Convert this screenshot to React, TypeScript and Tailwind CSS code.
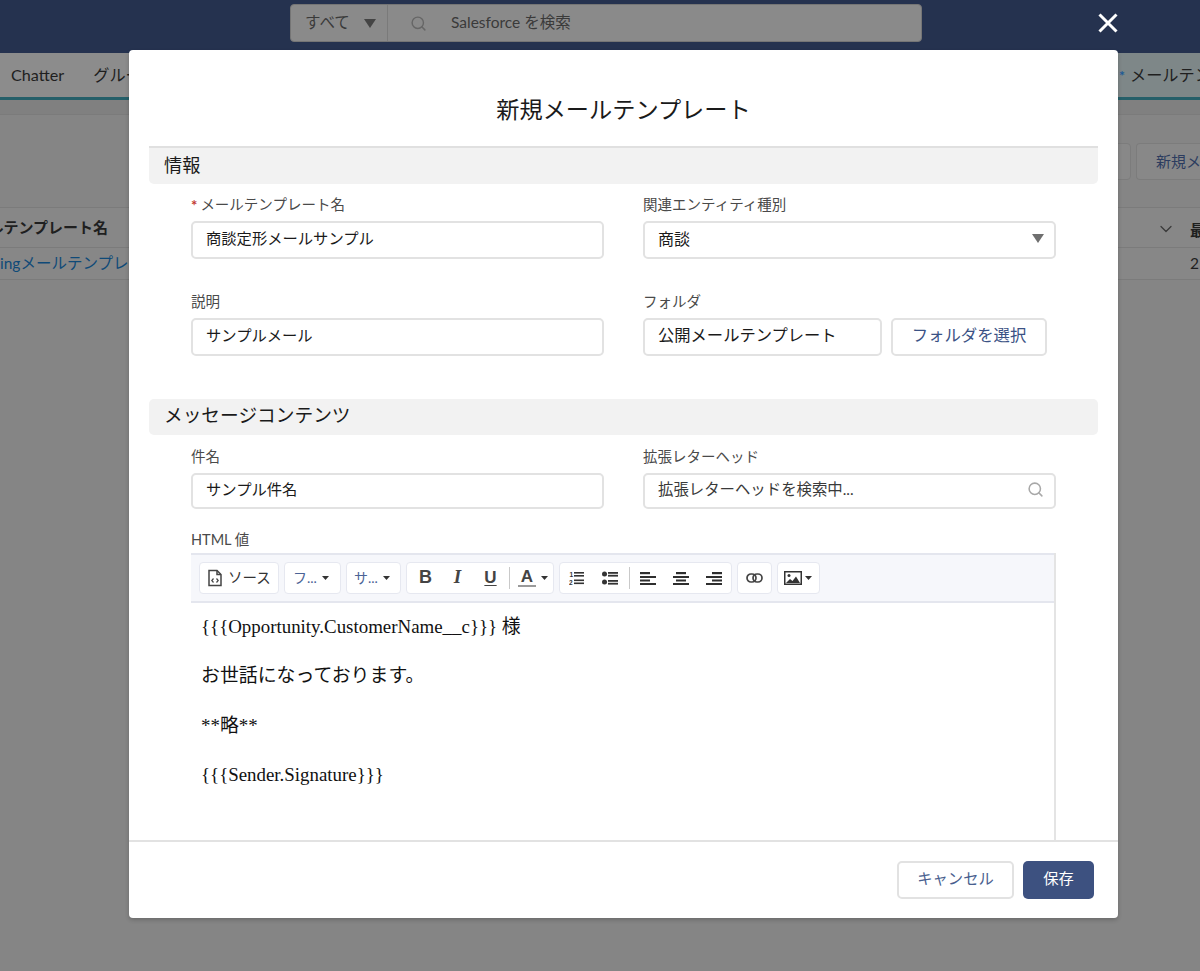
import React from "react";
import { Search, ChevronDown } from "lucide-react";

const Tri = ({ w = 12, h = 9, color = "#4a4a4a" }: { w?: number; h?: number; color?: string }) => (
  <svg width={w} height={h} viewBox="0 0 12 9" className="shrink-0"><path d="M0 0h12L6 9z" fill={color} /></svg>
);

const Field = ({ label, required, children }: { label: string; required?: boolean; children: React.ReactNode }) => (
  <div className="min-w-0">
    <div className="h-[20px] mb-[7px] pt-[2px] text-[14.5px] leading-[20px] text-[#4a4a4a] flex items-center">
      {required && <span className="text-[#c23934] mr-[3px] text-[15px] font-bold">*</span>}
      {label}
    </div>
    {children}
  </div>
);

const boxCls = "border-2 border-[#e2e2e2] rounded-[5px] bg-white flex items-center px-[13px] pb-[3px] text-[#1a1a1a]";

const Group = ({ className, children }: { className: string; children: React.ReactNode }) => (
  <div className={"h-[32px] bg-white border border-[#e6e8f0] rounded-[4px] flex items-center " + className}>{children}</div>
);

const Sep = () => <div className="w-px h-[22px] bg-[#c9c9c9]" />;

const Mini = () => <svg width="7" height="4" viewBox="0 0 7 4"><path d="M0 0h7L3.5 4z" fill="#333" /></svg>;

const Align = ({ kind }: { kind: "l" | "c" | "r" }) => {
  const short = kind === "l" ? 0 : kind === "c" ? 3 : 6;
  return (
    <svg width="16" height="14" viewBox="0 0 16 14" fill="#2e2e2e">
      <rect x={short} y="1" width="10" height="2.2" />
      <rect x="0" y="5" width="16" height="2" />
      <rect x={short} y="8.5" width="10" height="2" />
      <rect x="0" y="12" width="16" height="2" />
    </svg>
  );
};

const EditorToolbar = () => (
  <div className="h-[50px] pb-[1px] bg-[#f6f7fb] border-t-2 border-b-2 border-[#e4e6ee] flex items-center pl-[8px] gap-[5px] text-[#333]">
    <Group className="w-[80px] pl-[7px] gap-[5px] text-[14.5px]">
      <svg width="16" height="18" viewBox="0 0 16 18" fill="none" stroke="#444" strokeWidth="1.5">
        <path d="M2 1.5h8l4 4v11H2z" />
        <path d="M10 1.5v4h4" />
        <path d="M6.5 9.5L4.8 11.5l1.7 2M9.5 9.5l1.7 2-1.7 2" strokeWidth="1.2" />
      </svg>
      <span>ソース</span>
    </Group>
    <Group className="w-[57px] pl-[8px] gap-[5px] text-[14px] text-[#4b6396]">
      <span>フ...</span>
      <Mini />
    </Group>
    <Group className="w-[55px] pl-[7px] gap-[5px] text-[14px] text-[#4b6396]">
      <span>サ...</span>
      <Mini />
    </Group>
    <Group className="w-[148px] text-[#444]">
      <span className="w-[35px] text-center font-['Liberation_Sans',sans-serif] font-bold text-[18px] ml-[1px]">B</span>
      <span className="w-[29px] text-center font-['Liberation_Serif',serif] font-bold italic text-[19px]">I</span>
      <span className="w-[37px] text-center font-['Liberation_Sans',sans-serif] font-bold text-[17px] underline underline-offset-2">U</span>
      <Sep />
      <div className="ml-[8px] flex items-center gap-[5px]">
        <div className="flex flex-col items-center w-[18px]">
          <span className="font-['Liberation_Sans',sans-serif] font-bold text-[17px] leading-[15px] text-[#444]">A</span>
          <span className="w-[18px] h-[2px] bg-[#9a9a9a] mt-[1px]" />
        </div>
        <Mini />
      </div>
    </Group>
    <Group className="w-[173px]">
      <svg className="ml-[9px]" width="16" height="14" viewBox="0 0 16 14" fill="#333">
        <text x="0.5" y="6" fontSize="6.5" fontFamily="Liberation Sans" fontWeight="700">1</text>
        <text x="0" y="13.5" fontSize="6.5" fontFamily="Liberation Sans" fontWeight="700">2</text>
        <rect x="5" y="1" width="10" height="1.6" /><rect x="5" y="4" width="10" height="1.6" />
        <rect x="5" y="8.5" width="10" height="1.6" /><rect x="5" y="11.5" width="10" height="1.6" />
      </svg>
      <svg className="ml-[17px] mr-[11px]" width="16" height="14" viewBox="0 0 16 14" fill="#333">
        <circle cx="2.5" cy="3" r="2.5" /><circle cx="2.5" cy="11" r="2.5" />
        <rect x="6" y="1" width="10" height="1.8" /><rect x="6" y="3.8" width="10" height="1.8" />
        <rect x="6" y="9" width="10" height="1.8" /><rect x="6" y="11.8" width="10" height="1.8" />
      </svg>
      <Sep />
      <div className="ml-[10px] flex items-center gap-[17px]">
        <Align kind="l" />
        <Align kind="c" />
        <Align kind="r" />
      </div>
    </Group>
    <Group className="w-[35px] justify-center">
      <svg width="17" height="10" viewBox="0 0 17 10" fill="none" stroke="#444" strokeWidth="1.7">
        <rect x="1" y="1" width="9" height="8" rx="4" />
        <rect x="7" y="1" width="9" height="8" rx="4" />
      </svg>
    </Group>
    <Group className="w-[43px] pl-[6px] gap-[3px]">
      <svg width="18" height="14" viewBox="0 0 18 14">
        <rect x="0.75" y="0.75" width="16.5" height="12.5" fill="none" stroke="#333" strokeWidth="1.5" />
        <circle cx="5" cy="4.5" r="1.5" fill="#333" />
        <path d="M2 12l4-4 2.5 2L12 5.5l4 6.5z" fill="#333" />
      </svg>
      <Mini />
    </Group>
  </div>
);

export default function App() {
  return (
    <div className="relative w-[1200px] h-[971px] overflow-hidden bg-[#858585] font-['Lato','Noto_Sans_CJK_JP',sans-serif]">
      <header className="h-[53px] bg-[#25324f] flex items-start pl-[290px] pt-[4px]">
        <div className="w-[632px] h-[38px] bg-[#8a8a8a] border border-[#757575] rounded-[4px] flex items-center text-[#3a3a3a] text-[15.5px]">
          <div className="w-[97px] h-full border-r border-[#7a7a7a] flex items-center pl-[14px] gap-[14px]">
            <span>すべて</span>
            <Tri color="#444" />
          </div>
          <Search size={17} className="ml-[22px] text-[#666]" strokeWidth={2} />
          <span className="ml-[24px]">Salesforce を検索</span>
        </div>
      </header>

      <nav className="h-[47px] bg-[#8c8c8c] border-b-[3px] border-[#255f69] flex items-center justify-between text-[16.2px] text-[#1f1f1f] pl-[11px]">
        <div className="flex items-center gap-[29px]">
          <span>Chatter</span>
          <span>グループ</span>
        </div>
        <div className="flex items-center gap-[5px] w-[82px] h-full pl-[1px] bg-[#7e8788] whitespace-nowrap overflow-hidden">
          <span className="text-[#1c5a96] text-[14px] font-bold">*</span>
          <span>メールテンプレート</span>
        </div>
      </nav>

      <div className="h-[15px] border-b border-[#7b7b7b] bg-[#808080]" />

      <div className="h-[92px] flex justify-end items-start pt-[28px] gap-[5px]">
        <div className="w-[40px] h-[37px] border border-[#7c7c7c] rounded-[4px] bg-[#888]" />
        <div className="w-[64px] h-[37px] border border-r-0 border-[#7c7c7c] rounded-l-[4px] bg-[#888] flex items-center pl-[19px] text-[15px] text-[#2c3c5f] whitespace-nowrap overflow-hidden">新規メール</div>
      </div>

      <div className="h-[41px] border-y border-[#7b7b7b] bg-[#878787] flex items-center text-[15px] font-bold text-[#1f1f1f]">
        <div className="w-[116px] overflow-hidden flex justify-end whitespace-nowrap pr-[8px]">メールテンプレート名</div>
      </div>

      <div className="h-[32px] border-b border-[#7b7b7b] bg-[#878787] flex items-center text-[15.5px] text-[#0f4a78] justify-between">
        <span className="whitespace-nowrap">ingメールテンプレート</span>
        <span className="text-[#1f1f1f] w-[10px] overflow-hidden">2</span>
      </div>

      <ChevronDown size={20} strokeWidth={1.5} className="absolute left-[1156px] top-[219px] text-[#3a3a3a]" />
      <span className="absolute left-[1190px] top-[219px] text-[15px] font-bold text-[#1f1f1f]">最</span>

      <svg className="absolute left-[1098px] top-[13px]" width="20" height="20" viewBox="0 0 20 20" fill="none" stroke="#fff" strokeWidth="3">
        <path d="M1.5 1.5l17 17M18.5 1.5l-17 17" />
      </svg>

      <div className="absolute left-[129px] top-[50px] w-[989px] h-[868px] bg-white rounded-[4px] shadow-[0_2px_4px_rgba(0,0,0,0.2)] flex flex-col overflow-hidden">
        <div className="h-[96px] shrink-0 flex items-center justify-center pt-[24px] pb-[1px] text-[23.2px] text-[#1a1a1a]">新規メールテンプレート</div>

        <div className="flex-1 min-h-0 overflow-hidden">
          <div className="mx-[20px] h-[38px] bg-[#f2f2f2] border-t-2 border-[#e0e0e0] rounded-b-[5px] pl-[15px] flex items-center text-[18.2px] text-[#1a1a1a]">情報</div>

          <div className="px-[62px] pt-[10px] grid grid-cols-2 gap-x-[39px] gap-y-[32px]">
            <Field label="メールテンプレート名" required>
              <div className={boxCls + " h-[38px] text-[15.3px]"}>商談定形メールサンプル</div>
            </Field>
            <Field label="関連エンティティ種別">
              <div className={boxCls + " h-[38px] justify-between pr-[10px] text-[16px]"}>
                <span>商談</span>
                <Tri color="#6f6f6f" />
              </div>
            </Field>
            <Field label="説明">
              <div className={boxCls + " h-[38px] text-[15.3px]"}>サンプルメール</div>
            </Field>
            <Field label="フォルダ">
              <div className="flex gap-[9px]">
                <div className={boxCls + " h-[38px] w-[239px] text-[16.3px]"}>公開メールテンプレート</div>
                <div className="h-[38px] w-[156px] pb-[3px] border-2 border-[#e2e2e2] rounded-[5px] flex items-center justify-center text-[16.4px] text-[#3b5285]">フォルダを選択</div>
              </div>
            </Field>
          </div>

          <div className="mt-[43px] mx-[20px] h-[36px] pb-[3px] bg-[#f2f2f2] rounded-[5px] pl-[15px] flex items-center text-[18.7px] text-[#1a1a1a]">メッセージコンテンツ</div>

          <div className="px-[62px] pt-[11px] grid grid-cols-2 gap-x-[39px]">
            <Field label="件名">
              <div className={boxCls + " h-[36px] text-[15.3px]"}>サンプル件名</div>
            </Field>
            <Field label="拡張レターヘッド">
              <div className={boxCls + " h-[36px] justify-between pr-[10px] text-[15.4px]"}>
                <span className="text-[#3a3a3a]">拡張レターヘッドを検索中...</span>
                <Search size={17} className="text-[#a8a8a8]" strokeWidth={2.2} />
              </div>
            </Field>
          </div>

          <div className="px-[62px] pt-[19px]">
            <div className="h-[20px] mb-[5px] pt-[2px] text-[14.5px] leading-[20px] text-[#4a4a4a]">HTML 値</div>
            <div className="border-r-2 border-[#e4e4e4] h-[400px]">
              <EditorToolbar />
              <div className="pl-[10px] pt-[12px] flex flex-col gap-[25.3px] font-['Liberation_Serif','Noto_Sans_CJK_JP',serif] text-[18.9px] leading-[24px] text-[#111]">
                <p>{"{{{Opportunity.CustomerName__c}}}"} 様</p>
                <p>お世話になっております。</p>
                <p>**略**</p>
                <p>{"{{{Sender.Signature}}}"}</p>
              </div>
            </div>
          </div>
        </div>

        <footer className="h-[78px] shrink-0 border-t-2 border-[#e2e2e2] flex items-start justify-end pt-[19px] pr-[24px] gap-[9px] text-[15.3px]">
          <div className="w-[117px] h-[38px] pb-[3px] border-2 border-[#e2e2e2] rounded-[5px] flex items-center justify-center text-[#4a5f8f]">キャンセル</div>
          <div className="w-[71px] h-[38px] pb-[3px] bg-[#3d5180] rounded-[5px] flex items-center justify-center text-white">保存</div>
        </footer>
      </div>
    </div>
  );
}
